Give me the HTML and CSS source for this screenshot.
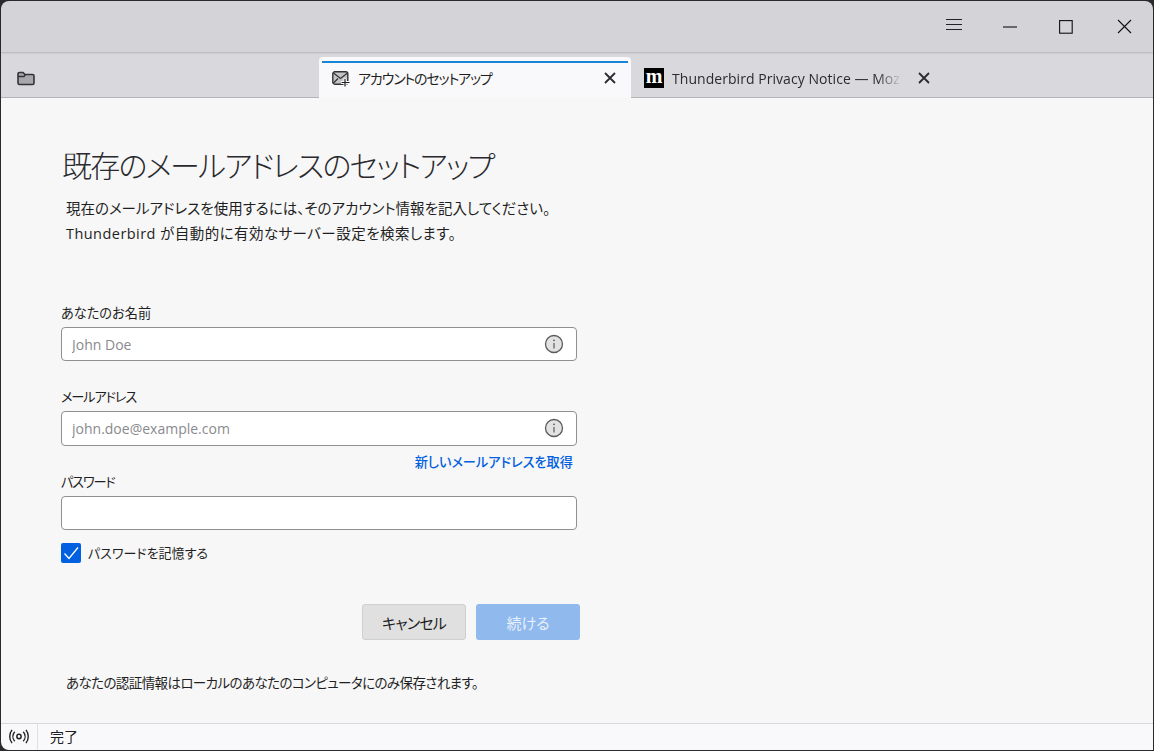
FILE: index.html
```html
<!DOCTYPE html>
<html lang="ja">
<head>
<meta charset="utf-8">
<title>アカウントのセットアップ</title>
<link rel="stylesheet" href="styles.css">
</head>
<body>
<div class="window">
  <header class="titlebar">
    <button class="win-btn menu" aria-label="menu"><svg width="16" height="14" viewBox="0 0 16 14"><path d="M0 1.500h16M0 6.500h16M0 11.500h16" stroke="#222" stroke-width="1.200" fill="none"/></svg></button>
    <button class="win-btn min" aria-label="min"><svg width="14" height="14" viewBox="0 0 14 14"><path d="M0 7h14" stroke="#111" stroke-width="1.100"/></svg></button>
    <button class="win-btn max" aria-label="max"><svg width="14" height="14" viewBox="0 0 14 14"><rect x=".6" y=".6" width="12.600" height="12.600" stroke="#111" stroke-width="1.100" fill="none"/></svg></button>
    <button class="win-btn close" aria-label="close"><svg width="15" height="15" viewBox="0 0 15 15"><path d="M1 1l13 13M14 1L1 14" stroke="#111" stroke-width="1.100" fill="none"/></svg></button>
  </header>
  <nav class="tabbar">
    <div class="folder"><svg width="18" height="15" viewBox="0 0 18 15"><path d="M1 3a1.500 1.500 0 0 1 1.500-1.500h3.500l2 2h7.500a1.500 1.500 0 0 1 1.500 1.500v7a1.500 1.500 0 0 1-1.500 1.500h-13a1.500 1.500 0 0 1-1.500-1.500z" fill="#a8a8ac" stroke="#333337" stroke-width="1.600"/><path d="M1 5.500h6l1.500-2" fill="none" stroke="#333337" stroke-width="1.300"/></svg></div>
    <div class="tab tab-active">
      <svg class="tab-icon" width="18" height="16" viewBox="0 0 18 16"><rect x=".8" y=".8" width="15" height="12.400" rx="2" fill="#c4c4c8" stroke="#333" stroke-width="1.400"/><path d="M1.500 2l7 5.500 7-5.500M1.500 12l4.500-4.500" fill="none" stroke="#333" stroke-width="1.200"/><path d="M13 7.500v8M9 11.500h8.500" stroke="#f9f9fb" stroke-width="3"/><path d="M13 8v7.500M9.500 11.500h8" stroke="#222" stroke-width="1.200"/></svg>
      <span class="tab-title">アカウントのセットアップ</span>
      <svg class="tab-x" width="12" height="12" viewBox="0 0 12 12"><path d="M1 1l10 10M11 1L1 11" stroke="#2b2b2f" stroke-width="1.800"/></svg>
    </div>
    <div class="tab tab-other">
      <span class="favicon">m</span>
      <span class="tab-title2">Thunderbird Privacy Notice — Mozilla</span>
      <svg class="tab-x" width="12" height="12" viewBox="0 0 12 12"><path d="M1 1l10 10M11 1L1 11" stroke="#2b2b2f" stroke-width="1.800"/></svg>
    </div>
  </nav>
  <main class="content">
    <h1 class="heading">既存のメールアドレスのセットアップ</h1>
    <p class="intro"><span class="intro-1">現在のメールアドレスを使用するには、そのアカウント情報を記入してください。</span><br><span class="intro-2">Thunderbird が自動的に有効なサーバー設定を検索します。</span></p>
    <form class="form">
      <label class="field-label" for="n">あなたのお名前</label>
      <div class="input-wrap">
        <input id="n" class="input" type="text" placeholder="John Doe">
        <svg class="info" width="20" height="20" viewBox="0 0 20 20"><circle cx="10" cy="10" r="8.500" fill="#e2e2e2" stroke="#5b5b5f" stroke-width="1.300"/><path d="M10 9v5.500" stroke="#5b5b5f" stroke-width="1.200"/><circle cx="10" cy="6.300" r=".9" fill="#5b5b5f"/></svg>
      </div>
      <label class="field-label label-kana label-mail" for="m">メールアドレス</label>
      <div class="input-wrap">
        <input id="m" class="input input-mail" type="text" placeholder="john.doe@example.com">
        <svg class="info" width="20" height="20" viewBox="0 0 20 20"><circle cx="10" cy="10" r="8.500" fill="#e2e2e2" stroke="#5b5b5f" stroke-width="1.300"/><path d="M10 9v5.500" stroke="#5b5b5f" stroke-width="1.200"/><circle cx="10" cy="6.300" r=".9" fill="#5b5b5f"/></svg>
      </div>
      <div class="get-row"><a class="get-link">新しいメールアドレスを取得</a></div>
      <label class="field-label label-kana" for="p">パスワード</label>
      <input id="p" class="input" type="password">
      <div class="check-row">
        <span class="check"><svg width="20" height="20" viewBox="0 0 20 20"><path d="M3.500 10.500l4.500 5 9-11" fill="none" stroke="#fff" stroke-width="1.300"/></svg></span>
        <span class="check-label">パスワードを記憶する</span>
      </div>
      <div class="actions">
        <button type="button" class="btn btn-cancel">キャンセル</button>
        <button type="button" class="btn btn-go">続ける</button>
      </div>
    </form>
    <p class="note">あなたの認証情報はローカルのあなたのコンピュータにのみ保存されます。</p>
  </main>
  <footer class="status">
    <div class="status-icon"><svg width="22" height="15" viewBox="0 0 20 14"><circle cx="10" cy="7" r="2" fill="none" stroke="#222" stroke-width="1.400"/><path d="M6 2.500a7 7 0 0 0 0 9M14 2.500a7 7 0 0 1 0 9M3.500 .8a10 10 0 0 0 0 12.400M16.500 .8a10 10 0 0 1 0 12.400" fill="none" stroke="#222" stroke-width="1.300"/></svg></div>
    <span class="status-text">完了</span>
  </footer>
</div>
</body>
</html>
```
FILE: styles.css
```css
* { box-sizing: border-box; }
html, body { margin: 0; height: 100%; }
body {
  background: #2a2a2e;
  font-family: "Open Sans", "Noto Sans CJK JP", sans-serif;
  font-feature-settings: "palt";
  color: #1f1f23;
  overflow: hidden;
}
.window {
  width: 1154px;
  height: 751px;
  display: flex;
  flex-direction: column;
  padding: 1px;
}
.titlebar {
  height: 51px;
  flex: none;
  background: #d4d3d8;
  border-radius: 8px 8px 0 0;
  display: flex;
  justify-content: flex-end;
  align-items: center;
  box-shadow: 0 1px 2px rgba(0,0,0,.18);
  position: relative;
}
.win-btn {
  border: 0;
  background: none;
  padding: 0;
  height: 51px;
  display: flex;
  align-items: center;
  justify-content: center;
}
.menu { width: 58px; margin-top: -4px; }
.min { width: 54px; }
.max { width: 58px; }
.close { width: 58px; }
.tabbar {
  height: 46px;
  flex: none;
  background: #d9d8dd;
  border-bottom: 1px solid #b4b4b6;
  display: flex;
  align-items: flex-start;
}
.folder {
  width: 318px;
  height: 45px;
  padding: 17px 0 0 16px;
}
.tab { display: flex; align-items: center; }
.tab-active {
  width: 312px;
  height: 41px;
  margin-top: 5px;
  background: #f9f9fb;
  border-radius: 4px 4px 0 0;
  padding: 0 15px 0 13px;
  position: relative;
}
.tab-active::before {
  content: "";
  position: absolute;
  left: 3px;
  right: 3px;
  top: 4px;
  height: 2px;
  background: #1a85d6;
}
.tab-icon { flex: none; margin: 2px 8px 0 0; }
.tab-title { font-size: 14px; flex: 1; letter-spacing: -1.150px; color: #1f1f23; }
.tab-other { height: 41px; margin-top: 5px; padding: 0 0 0 13px; width: 310px; }
.favicon {
  width: 20px;
  height: 20px;
  background: #000;
  color: #fff;
  font: 700 20px/17px "Liberation Serif", serif;
  text-align: center;
  flex: none;
  margin-right: 8px;
}
.tab-title2 {
  width: 230px;
  margin: 2px 16px 0 0;
  font-size: 14px;
  letter-spacing: .05px;
  white-space: nowrap;
  overflow: hidden;
  color: #2b2b2f;
  -webkit-mask-image: linear-gradient(to right, #000 205px, transparent 230px);
  mask-image: linear-gradient(to right, #000 205px, transparent 230px);
}
.content {
  flex: 1;
  background: #f7f7f8;
  padding: 46px 0 0 60px;
  min-height: 0;
}
.heading {
  margin: 0 0 0 1px;
  font-size: 30px;
  font-weight: 300;
  letter-spacing: -1.750px;
  line-height: 44px;
  color: #2a2a2e;
}
.intro {
  margin: 8px 0 0 5px;
  font-size: 14.500px;
  line-height: 25px;
  color: #1f1f23;
}
.intro-2 { letter-spacing: .45px; }
.form { width: 519px; margin-top: 57px; }
.field-label {
  display: block;
  font-size: 13.200px;
  line-height: 20px;
  margin-bottom: 4px;
  color: #1f1f23;
}
.label-kana { letter-spacing: -1.150px; }
.input-wrap { position: relative; width: 516px; }
.input {
  display: block;
  width: 516px;
  height: 34px;
  border: 1px solid #909090;
  border-radius: 4px;
  background: #fff;
  padding: 0 10px;
  font: 14px "Open Sans", "Noto Sans CJK JP", sans-serif;
  outline: 0;
}
.input::placeholder { color: #8a8a8e; opacity: 1; }
.input-mail { height: 35px; }
.info { position: absolute; right: 13px; top: 7px; }
.label-mail { margin-top: 26px; }
.get-row {
  width: 516px;
  text-align: right;
  padding-right: 4px;
  margin-top: 4px;
  height: 22px;
}
.get-link { font-size: 13.200px; line-height: 20px; font-weight: 500; color: #0060df; }
.check-row { display: flex; align-items: center; margin-top: 13px; height: 20px; }
.check {
  width: 20px;
  height: 20px;
  background: #0060df;
  border-radius: 2px;
  margin-right: 7px;
  display: flex;
}
.check-label { font-size: 13px; color: #1f1f23; padding-bottom: 2px; }
.actions {
  display: flex;
  justify-content: flex-end;
  gap: 10px;
  margin-top: 41px;
}
.btn {
  width: 104px;
  height: 36px;
  border-radius: 3px;
  font: 15px "Open Sans", "Noto Sans CJK JP", sans-serif;
  font-feature-settings: "palt";
}
.btn-cancel { background: #e0e0e0; border: 1px solid #cfcfcf; color: #1f1f23; letter-spacing: -.8px; }
.btn-go { background: #90b9ed; border: 0; color: #e8f0fb; }
.note {
  margin: 33px 0 0 5px;
  font-size: 13.500px;
  letter-spacing: -.6px;
  line-height: 20px;
}
.status {
  height: 27px;
  flex: none;
  background: #f9f9fb;
  border-top: 1px solid #d8d8da;
  display: flex;
  align-items: center;
  border-radius: 0 0 0 8px;
}
.status-icon {
  width: 37px;
  height: 100%;
  border-right: 1px solid #e0e0e2;
  display: flex;
  align-items: center;
  justify-content: center;
  padding-bottom: 2px;
}
.status-text { margin-left: 12px; font-size: 14px; padding-bottom: 2px; }
```
